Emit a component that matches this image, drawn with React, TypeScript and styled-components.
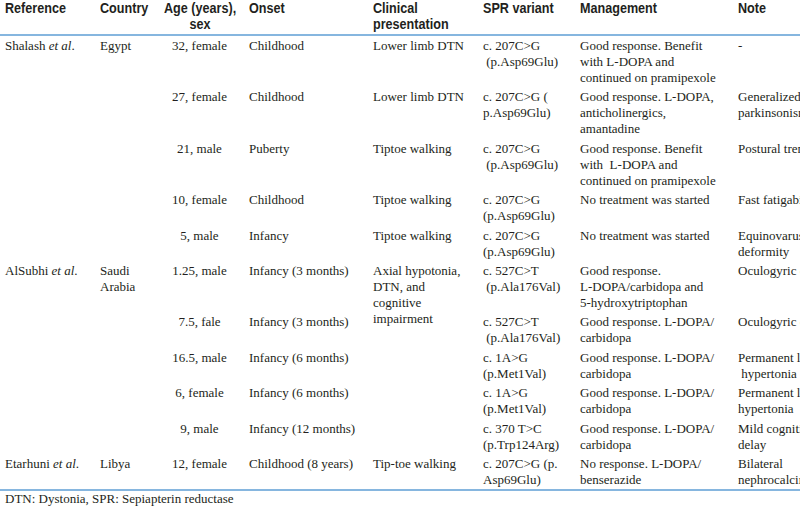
import React from 'react';
import styled, { createGlobalStyle } from 'styled-components';

const GlobalStyle = createGlobalStyle`
  html, body {
    margin: 0;
    padding: 0;
    background: #ffffff;
    overflow: hidden;
  }
`;

const Page = styled.div`
  width: 800px;
  height: 506px;
  overflow: hidden;
  background: #ffffff;
  color: #231f20;
`;

const Table = styled.table`
  width: 843px;
  table-layout: fixed;
  border-collapse: collapse;
  border-bottom: 2px solid #86b6df;
`;

const HeadRow = styled.tr`
  border-bottom: 2px solid #86b6df;
`;

const HeadCell = styled.th<{ $align?: 'left' | 'center' }>`
  padding: 0 5px 2px;
  font-family: 'Liberation Sans', Arial, sans-serif;
  font-weight: 700;
  font-size: 14px;
  line-height: 16px;
  color: #231f20;
  text-align: ${({ $align }) => $align || 'left'};
  vertical-align: top;
  white-space: pre;
`;

// the source uses a condensed grotesque; squeeze the bold sans to match
const HeadText = styled.span<{ $align?: 'left' | 'center' }>`
  display: inline-block;
  transform: scaleX(0.9);
  transform-origin: ${({ $align }) => ($align === 'center' ? 'center top' : 'left top')};
`;

const BodyCell = styled.td<{ $align?: 'left' | 'center' }>`
  padding: 2px 5px 1.4px;
  font-family: 'Liberation Serif', 'Times New Roman', serif;
  font-size: 13px;
  line-height: 16px;
  color: #231f20;
  text-align: ${({ $align }) => $align || 'left'};
  vertical-align: top;
  white-space: pre;
  overflow: hidden;
`;

const Footnote = styled.p`
  margin: 0;
  padding: 0 5px;
  font-family: 'Liberation Serif', 'Times New Roman', serif;
  font-size: 13px;
  line-height: 16px;
  color: #231f20;
`;

type Entry = {
  ref?: string;
  country?: string;
  span?: number;
  age: string;
  onset: string;
  clinical?: string;
  clinicalSpan?: number;
  spr: string;
  mgmt: string;
  note: string;
};

const LDOPA_CARBIDOPA = 'Good response. L-DOPA/\ncarbidopa';

const ROWS: Entry[] = [
  {
    ref: 'Shalash',
    country: 'Egypt',
    span: 5,
    age: '32, female',
    onset: 'Childhood',
    clinical: 'Lower limb DTN',
    spr: 'c. 207C>G\n (p.Asp69Glu)',
    mgmt: 'Good response. Benefit\nwith L-DOPA and\ncontinued on pramipexole',
    note: '-',
  },
  {
    age: '27, female',
    onset: 'Childhood',
    clinical: 'Lower limb DTN',
    spr: 'c. 207C>G (\np.Asp69Glu)',
    mgmt: 'Good response. L-DOPA,\nanticholinergics,\namantadine',
    note: 'Generalized\nparkinsonism',
  },
  {
    age: '21, male',
    onset: 'Puberty',
    clinical: 'Tiptoe walking',
    spr: 'c. 207C>G\n (p.Asp69Glu)',
    mgmt: 'Good response. Benefit\nwith  L-DOPA and\ncontinued on pramipexole',
    note: 'Postural tremor',
  },
  {
    age: '10, female',
    onset: 'Childhood',
    clinical: 'Tiptoe walking',
    spr: 'c. 207C>G\n(p.Asp69Glu)',
    mgmt: 'No treatment was started',
    note: 'Fast fatigability',
  },
  {
    age: '5, male',
    onset: 'Infancy',
    clinical: 'Tiptoe walking',
    spr: 'c. 207C>G\n(p.Asp69Glu)',
    mgmt: 'No treatment was started',
    note: 'Equinovarus\ndeformity',
  },
  {
    ref: 'AlSubhi',
    country: 'Saudi\nArabia',
    span: 5,
    age: '1.25, male',
    onset: 'Infancy (3 months)',
    clinical: 'Axial hypotonia,\nDTN, and\ncognitive\nimpairment',
    clinicalSpan: 5,
    spr: 'c. 527C>T\n (p.Ala176Val)',
    mgmt: 'Good response.\nL-DOPA/carbidopa and\n5-hydroxytriptophan',
    note: 'Oculogyric crisis',
  },
  {
    age: '7.5, fale',
    onset: 'Infancy (3 months)',
    spr: 'c. 527C>T\n (p.Ala176Val)',
    mgmt: LDOPA_CARBIDOPA,
    note: 'Oculogyric crisis',
  },
  {
    age: '16.5, male',
    onset: 'Infancy (6 months)',
    spr: 'c. 1A>G\n(p.Met1Val)',
    mgmt: LDOPA_CARBIDOPA,
    note: 'Permanent limb\n hypertonia',
  },
  {
    age: '6, female',
    onset: 'Infancy (6 months)',
    spr: 'c. 1A>G\n(p.Met1Val)',
    mgmt: LDOPA_CARBIDOPA,
    note: 'Permanent limb\nhypertonia',
  },
  {
    age: '9, male',
    onset: 'Infancy (12 months)',
    spr: 'c. 370 T>C\n(p.Trp124Arg)',
    mgmt: LDOPA_CARBIDOPA,
    note: 'Mild cognitive\ndelay',
  },
  {
    ref: 'Etarhuni',
    country: 'Libya',
    span: 1,
    age: '12, female',
    onset: 'Childhood (8 years)',
    clinical: 'Tip-toe walking',
    spr: 'c. 207C>G (p.\nAsp69Glu)',
    mgmt: 'No response. L-DOPA/\nbenserazide',
    note: 'Bilateral\nnephrocalcinosis',
  },
];

// column widths in px, left to right
const COLS = [95, 60, 89, 124, 110, 97, 158, 110];

const HEADERS: { label: string; align?: 'left' | 'center' }[] = [
  { label: 'Reference' },
  { label: 'Country' },
  { label: 'Age (years),\nsex', align: 'center' },
  { label: 'Onset' },
  { label: 'Clinical\npresentation' },
  { label: 'SPR variant' },
  { label: 'Management' },
  { label: 'Note' },
];

export default function App() {
  return (
    <Page>
      <GlobalStyle />
      <Table>
        <colgroup>
          {COLS.map((w, i) => (
            <col key={i} style={{ width: w }} />
          ))}
        </colgroup>
        <thead>
          <HeadRow>
            {HEADERS.map((h) => (
              <HeadCell key={h.label} $align={h.align}>
                <HeadText $align={h.align}>{h.label}</HeadText>
              </HeadCell>
            ))}
          </HeadRow>
        </thead>
        <tbody>
          {ROWS.map((r, i) => (
            <tr key={i}>
              {r.ref !== undefined && (
                <BodyCell rowSpan={r.span}>
                  {r.ref} <i>et al</i>.
                </BodyCell>
              )}
              {r.country !== undefined && <BodyCell rowSpan={r.span}>{r.country}</BodyCell>}
              <BodyCell $align="center">{r.age}</BodyCell>
              <BodyCell>{r.onset}</BodyCell>
              {r.clinical !== undefined && (
                <BodyCell rowSpan={r.clinicalSpan || 1}>{r.clinical}</BodyCell>
              )}
              <BodyCell>{r.spr}</BodyCell>
              <BodyCell>{r.mgmt}</BodyCell>
              <BodyCell>{r.note}</BodyCell>
            </tr>
          ))}
        </tbody>
      </Table>
      <Footnote>DTN: Dystonia, SPR: Sepiapterin reductase</Footnote>
    </Page>
  );
}
